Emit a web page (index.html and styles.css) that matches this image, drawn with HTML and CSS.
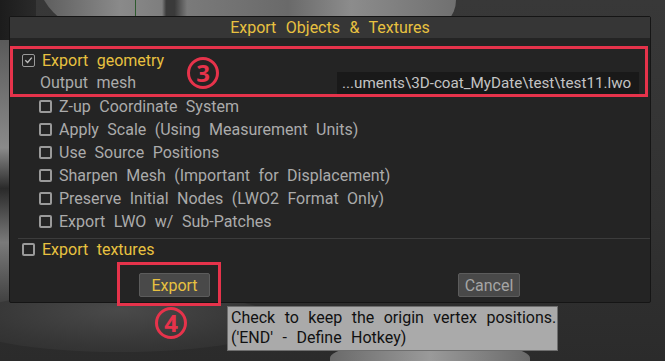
FILE: index.html
```html
<!DOCTYPE html>
<html>
<head>
<meta charset="utf-8">
<link rel="stylesheet" href="styles.css">
</head>
<body>
<div class="scene">
  <div class="bg-shape bg-top-light"></div>
  <div class="bg-shape bg-top-dark"></div>
  <div class="bg-shape bg-left"></div>
  <div class="bg-shape bg-bottom-light"></div>
  <div class="bg-shape bg-pedestal"></div>
  <div class="bg-shape bg-green-line"></div>

  <div class="dialog">
    <div class="title">Export Objects &amp; Textures</div>
    <div class="body">
      <div class="geom-box">
        <div class="row main-row">
          <span class="cb checked"><svg viewBox="0 0 12 12" width="12" height="12"><path d="M2.5 6.2 L5 8.6 L9.6 3.4" fill="none" stroke="#bdbdbd" stroke-width="1.5"/></svg></span>
          <span class="label yellow">Export geometry</span>
        </div>
        <div class="row mesh-row">
          <span class="label gray">Output mesh</span>
          <span class="path">...uments\3D-coat_MyDate\test\test11.lwo</span>
        </div>
      </div>
      <div class="options">
        <div class="row opt"><span class="cb"></span><span class="label gray">Z-up Coordinate System</span></div>
        <div class="row opt"><span class="cb"></span><span class="label gray">Apply Scale (Using Measurement Units)</span></div>
        <div class="row opt"><span class="cb"></span><span class="label gray">Use Source Positions</span></div>
        <div class="row opt"><span class="cb"></span><span class="label gray">Sharpen Mesh (Important for Displacement)</span></div>
        <div class="row opt"><span class="cb"></span><span class="label gray">Preserve Initial Nodes (LWO2 Format Only)</span></div>
        <div class="row opt"><span class="cb"></span><span class="label gray">Export LWO w/ Sub-Patches</span></div>
      </div>
      <div class="separator"></div>
      <div class="row main-row tex-row"><span class="cb"></span><span class="label yellow">Export textures</span></div>
      <div class="buttons">
        <span class="btn btn-export">Export</span>
        <span class="btn btn-cancel">Cancel</span>
      </div>
    </div>
  </div>

  <div class="mark mark-3">3</div>
  <div class="redbox export-box"></div>
  <div class="mark mark-4">4</div>

  <div class="tooltip">Check to keep the origin vertex positions.<br>('END' - Define Hotkey)</div>
</div>
</body>
</html>
```

FILE: styles.css
```css
html, body {
  margin: 0;
  padding: 0;
}
body {
  width: 665px;
  height: 361px;
  overflow: hidden;
  background: #2f2f2f;
  font-family: Roboto, "Noto Sans", "Liberation Sans", sans-serif;
}
.scene {
  position: relative;
  width: 665px;
  height: 361px;
  overflow: hidden;
  background: linear-gradient(180deg, #383838 0%, #323232 60%, #2b2b2b 100%);
  padding-top: 16px;
  box-sizing: border-box;
}
.bg-shape {
  position: absolute;
}
.bg-top-light {
  left: 36px;
  top: -40px;
  width: 420px;
  height: 70px;
  border-radius: 0 0 30px 60px;
  background: linear-gradient(90deg, #5a5a5a 0%, #8a8a8a 20%, #7e7e7e 30%, #3a3a3a 31%, #3a3a3a 33%, #7a7a7a 36%, #6a6a6a 60%, #8c8c8c 75%, #707070 100%);
}
.bg-top-dark {
  left: 0;
  top: 0;
  width: 36px;
  height: 60px;
  background: linear-gradient(90deg, #1c1c1c, #2a2a2a);
}
.bg-left {
  left: 0;
  top: 40px;
  width: 12px;
  height: 270px;
  background: linear-gradient(180deg, #5a5a5a 0%, #8a8a8a 40%, #2a2a2a 55%, #7a7a7a 75%, #3a3a3a 100%);
}
.bg-bottom-light {
  left: -40px;
  top: 292px;
  width: 320px;
  height: 60px;
  border-radius: 50%;
  background: radial-gradient(ellipse at 50% 30%, #4a4a4a 0%, #363636 60%, rgba(40,40,40,0) 100%);
}
.bg-pedestal {
  left: 330px;
  top: 342px;
  width: 200px;
  height: 40px;
  border-radius: 40% 40% 0 0;
  background: linear-gradient(90deg, #6a6a6a, #9a9a9a 50%, #6a6a6a);
}
.bg-green-line {
  left: 135px;
  top: 0;
  width: 1px;
  height: 16px;
  background: #2e5a2e;
}

.dialog {
  position: relative;
  margin-left: 9px;
  width: 642px;
  height: 287px;
  background: #242424;
  border: 1px solid #151515;
  box-sizing: border-box;
  border-radius: 2px;
}
.title {
  height: 21px;
  background: #363636;
  color: #e8c140;
  font-size: 16px;
  line-height: 21px;
  text-align: center;
  word-spacing: 5.5px;
}
.body {
  padding-top: 8px;
}
.geom-box {
  width: 638px;
  height: 51px;
  border: 3px solid #e6334b;
  box-sizing: border-box;
  position: relative;
}
.row {
  display: flex;
  align-items: center;
  height: 23px;
  font-size: 16px;
  word-spacing: 4.5px;
}
.geom-box .main-row {
  padding-left: 9px;
  height: 22px;
}
.mesh-row {
  padding-left: 27px;
  justify-content: space-between;
  padding-right: 6px;
  height: 23px;
}
.label {
  white-space: nowrap;
}
.yellow { color: #e8c140; }
.gray { color: #ababab; }
.cb {
  width: 13px;
  height: 13px;
  border: 2px solid #9a9a9a;
  border-radius: 2px;
  box-sizing: border-box;
  margin-right: 7px;
  display: flex;
  align-items: center;
  justify-content: center;
  flex: none;
}
.cb svg { display: block; }
.cb.checked { border-width: 1.5px; }
.path {
  background: #191919;
  color: #c4c4c4;
  font-size: 15.2px;
  word-spacing: 0;
  width: 302px;
  height: 22px;
  line-height: 22px;
  padding-left: 5px;
  box-sizing: border-box;
  white-space: nowrap;
  overflow: hidden;
}
.options {
  margin-top: -2px;
}
.opt {
  padding-left: 29px;
}
.separator {
  margin: 5px 0 0 8px;
  height: 1px;
  background: #3c3c3c;
}
.tex-row {
  padding-left: 12px;
  height: 21px;
}
.buttons {
  display: flex;
  margin-top: 13px;
  padding-left: 129px;
}
.btn {
  height: 24px;
  line-height: 23px;
  font-size: 16px;
  text-align: center;
  background: #494949;
  border: 1px solid #5c5c5c;
  box-sizing: border-box;
  border-radius: 2px;
}
.btn-export {
  width: 71px;
  color: #e8c140;
}
.btn-cancel {
  width: 62px;
  margin-left: 248px;
  color: #a5a5a5;
}

.redbox {
  position: absolute;
  border: 3px solid #e6334b;
  box-sizing: border-box;
}
.export-box {
  left: 117px;
  top: 262px;
  width: 104px;
  height: 44px;
}
.mark {
  position: absolute;
  width: 32px;
  height: 32px;
  border: 3px solid #e6334b;
  border-radius: 50%;
  box-sizing: border-box;
  color: #e6334b;
  font-family: "Noto Sans", Roboto, sans-serif;
  font-weight: bold;
  font-size: 24px;
  line-height: 26px;
  text-align: center;
}
.mark-3 {
  left: 187px;
  top: 57px;
}
.mark-4 {
  left: 155px;
  top: 307px;
}
.tooltip {
  position: absolute;
  left: 227px;
  top: 306px;
  width: 331px;
  height: 45px;
  background: #aaaaaa;
  border: 1px solid #6e6e6e;
  box-sizing: border-box;
  color: #111;
  font-size: 16px;
  line-height: 20px;
  padding: 1px 0 0 3px;
  word-spacing: 5.5px;
  white-space: nowrap;
  overflow: hidden;
}
```
